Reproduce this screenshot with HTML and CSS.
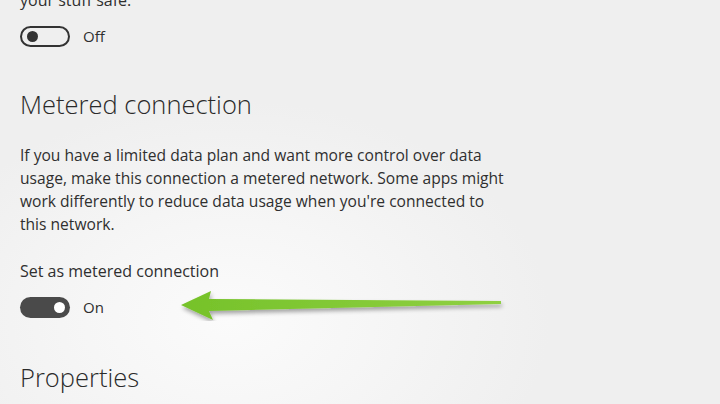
FILE: index.html
```html
<!DOCTYPE html>
<html>
<head>
<meta charset="utf-8">
<link rel="stylesheet" href="styles.css">
</head>
<body>
<div class="page">
  <p class="text cut">your stuff safe.</p>
  <div class="toggle-row first">
    <span class="toggle off"><span class="knob"></span></span>
    <span class="state">Off</span>
  </div>
  <h2 class="heading">Metered connection</h2>
  <p class="text desc">If you have a limited data plan and want more control over data<br>usage, make this connection a metered network. Some apps might<br>work differently to reduce data usage when you're connected to<br>this network.</p>
  <p class="text label">Set as metered connection</p>
  <div class="toggle-row second">
    <span class="toggle on"><span class="knob"></span></span>
    <span class="state">On</span>
  </div>
  <h2 class="heading props">Properties</h2>
</div>
<svg class="arrow" width="340" height="40" viewBox="0 0 340 40">
  <defs>
    <linearGradient id="g" x1="0" y1="0" x2="1" y2="0">
      <stop offset="0" stop-color="#76c22a"/>
      <stop offset="1" stop-color="#8fd042"/>
    </linearGradient>
    <filter id="s" x="-10%" y="-50%" width="120%" height="200%">
      <feGaussianBlur in="SourceAlpha" stdDeviation="2"/>
      <feOffset dx="1" dy="3"/>
      <feComponentTransfer><feFuncA type="linear" slope="0.35"/></feComponentTransfer>
      <feMerge><feMergeNode/><feMergeNode in="SourceGraphic"/></feMerge>
    </filter>
  </defs>
  <path d="M8 24 L38 10 L36 18 L328 20 L328 23 L36 30 L40 39 Z" fill="url(#g)" filter="url(#s)"/>
</svg>
</body>
</html>
```
FILE: styles.css
```css
html, body {
  margin: 0;
  padding: 0;
}
body {
  width: 720px;
  height: 404px;
  overflow: hidden;
  position: relative;
  background: radial-gradient(ellipse 320px 220px at 230px 320px, #fbfbfb 0%, #f6f6f6 45%, #efefef 100%), #efefef;
  font-family: "Open Sans", "Noto Sans", sans-serif;
  color: #2f2f2f;
}
.page {
  padding-left: 20px;
}
.text {
  margin: 0;
  font-size: 16px;
  line-height: 23px;
}
.cut {
  margin-top: -11px;
}
.toggle-row {
  display: flex;
  align-items: center;
  gap: 13px;
  height: 22px;
}
.toggle-row.first {
  margin-top: 13px;
}
.toggle-row.second {
  margin-top: 13px;
}
.toggle {
  box-sizing: border-box;
  width: 50px;
  height: 21px;
  border-radius: 11px;
  display: flex;
  align-items: center;
  padding: 0 5px;
}
.toggle.off {
  border: 2px solid #333;
  justify-content: flex-start;
}
.toggle.on {
  background: #4a4a4a;
  justify-content: flex-end;
}
.knob {
  width: 11px;
  height: 11px;
  border-radius: 50%;
}
.off .knob {
  background: #333;
}
.on .knob {
  background: #fff;
}
.state {
  font-size: 15px;
}
.heading {
  margin: 0;
  font-weight: 300;
  font-size: 25.5px;
  line-height: 34px;
  color: #2a2a2a;
  margin-top: 40px;
}
.desc {
  margin-top: 23px;
  font-size: 15.6px;
  white-space: nowrap;
}
.label {
  margin-top: 24px;
}
.props {
  margin-top: 42px;
}
.arrow {
  position: absolute;
  left: 173px;
  top: 281px;
}
```
